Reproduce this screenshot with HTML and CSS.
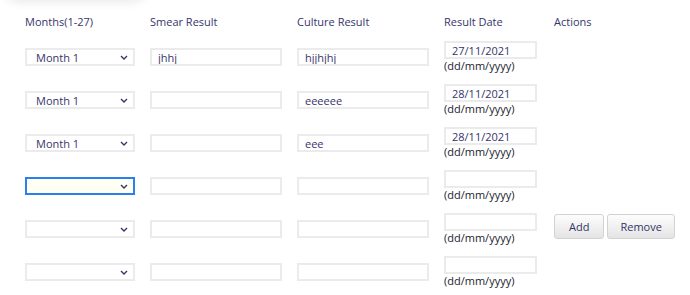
FILE: index.html
```html
<!DOCTYPE html>
<html lang="en">
<head>
    <meta charset="UTF-8">
    <meta name="viewport" content="width=device-width, initial-scale=1.0">
    <title>Culture Results</title>
    <link rel="stylesheet" href="styles.css">
</head>
<body>
    <div class="card-edge"></div>
    <div class="results">
        <div class="head">Months(1-27)</div>
        <div class="head">Smear Result</div>
        <div class="head">Culture Result</div>
        <div class="head">Result Date</div>
        <div class="head">Actions</div>

        <!-- row 1 -->
        <div class="cell"><select class="month"><option>Month 1</option></select></div>
        <div class="cell"><input class="text" type="text" value="jhhj"></div>
        <div class="cell"><input class="text" type="text" value="hjjhjhj"></div>
        <div class="cell date"><input class="date-input" type="text" value="27/11/2021"><span class="hint">(dd/mm/yyyy)</span></div>
        <div class="cell"></div>

        <!-- row 2 -->
        <div class="cell"><select class="month"><option>Month 1</option></select></div>
        <div class="cell"><input class="text" type="text"></div>
        <div class="cell"><input class="text" type="text" value="eeeeee"></div>
        <div class="cell date"><input class="date-input" type="text" value="28/11/2021"><span class="hint">(dd/mm/yyyy)</span></div>
        <div class="cell"></div>

        <!-- row 3 -->
        <div class="cell"><select class="month"><option>Month 1</option></select></div>
        <div class="cell"><input class="text" type="text"></div>
        <div class="cell"><input class="text" type="text" value="eee"></div>
        <div class="cell date"><input class="date-input" type="text" value="28/11/2021"><span class="hint">(dd/mm/yyyy)</span></div>
        <div class="cell"></div>

        <!-- row 4 -->
        <div class="cell"><select class="month focused"><option></option></select></div>
        <div class="cell"><input class="text" type="text"></div>
        <div class="cell"><input class="text" type="text"></div>
        <div class="cell date"><input class="date-input" type="text"><span class="hint">(dd/mm/yyyy)</span></div>
        <div class="cell"></div>

        <!-- row 5 -->
        <div class="cell"><select class="month"><option></option></select></div>
        <div class="cell"><input class="text" type="text"></div>
        <div class="cell"><input class="text" type="text"></div>
        <div class="cell date"><input class="date-input" type="text"><span class="hint">(dd/mm/yyyy)</span></div>
        <div class="cell actions">
            <button class="btn">Add</button>
            <button class="btn btn-remove">Remove</button>
        </div>

        <!-- row 6 -->
        <div class="cell"><select class="month"><option></option></select></div>
        <div class="cell"><input class="text" type="text"></div>
        <div class="cell"><input class="text" type="text"></div>
        <div class="cell date"><input class="date-input" type="text"><span class="hint">(dd/mm/yyyy)</span></div>
        <div class="cell"></div>
    </div>
</body>
</html>
```

FILE: styles.css
```css
body {
    margin: 0;
    background: #fff;
    font-family: "Open Sans", "Noto Sans", sans-serif;
    font-size: 11px;
    color: #35356a;
    overflow: hidden;
}
.card-edge {
    width: 150px;
    height: 20px;
    margin-top: -20px;
    border-radius: 0 0 40px 40px;
    background: #fff;
    box-shadow: 0 3px 10px rgba(0,0,0,0.08);
}
.results {
    display: grid;
    grid-template-columns: 110px 132px 132px 95px auto;
    grid-auto-rows: 32px;
    grid-template-rows: 16px;
    column-gap: 15px;
    row-gap: 11px;
    align-items: center;
    padding: 14px 0 0 25px;
}
.head {
    line-height: 16px;
}
.cell {
    display: flex;
    flex-direction: column;
    justify-content: center;
}
.month,
.text,
.date-input {
    box-sizing: border-box;
    height: 18px;
    border: 2px solid #ebebeb;
    background: #fff;
    font-family: inherit;
    font-size: 11px;
    color: #35356a;
    outline: none;
    margin: 0;
}
.month {
    width: 110px;
    padding: 0 20px 0 9px;
    -webkit-appearance: none;
    appearance: none;
    background: #fff url("data:image/svg+xml,%3Csvg xmlns='http://www.w3.org/2000/svg' width='8' height='5' viewBox='0 0 8 5'%3E%3Cpath d='M1 1l3 3 3-3' fill='none' stroke='%2335356a' stroke-width='1.4'/%3E%3C/svg%3E") no-repeat right 5px center;
}
.month.focused {
    border-color: #2a7ff0;
    background-color: #fffff4;
}
.text {
    width: 132px;
    padding: 0 6px;
}
.date-input {
    width: 93px;
    padding: 0 6px;
}
.hint {
    line-height: 14px;
    color: #1c1c2c;
}
.actions {
    flex-direction: row;
    justify-content: flex-start;
    align-items: center;
    gap: 3px;
    padding-bottom: 6px;
}
.btn {
    height: 25px;
    padding: 0 14px;
    border: 1px solid #d2d2d2;
    border-radius: 3px;
    background: linear-gradient(#fdfdfd, #e4e4e4);
    font-family: inherit;
    font-size: 11px;
    color: #35356a;
    margin: 0;
}
.btn-remove {
    padding: 0 12px;
}
```
